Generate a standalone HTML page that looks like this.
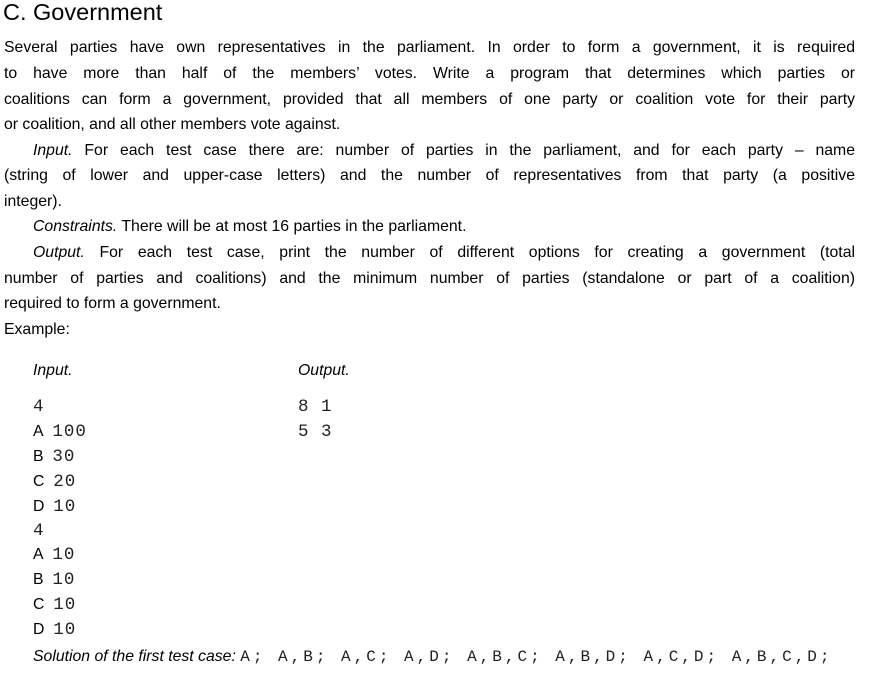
<!DOCTYPE html>
<html><head><meta charset="utf-8"><style>
body{margin:0;width:878px;height:696px;background:#fff;color:#000;position:relative;overflow:hidden;font-family:"Liberation Sans",sans-serif}
.l{position:absolute;left:4px;width:851px;font-size:15.8px;line-height:20px;white-space:nowrap}
.j{text-align:justify;text-align-last:justify;white-space:normal}
.i{font-style:italic}
.c{position:absolute;font-size:15.8px;line-height:20px;white-space:nowrap}
.m{font-family:"Liberation Mono",monospace;font-size:17.5px;letter-spacing:1px;color:#222}
</style></head><body>
<div style="position:absolute;left:3px;top:-3px;font-size:23.5px;line-height:30px">C. Government</div>
<div class="l j" style="top:38px">Several parties have own representatives in the parliament. In order to form a government, it is required</div>
<div class="l j" style="top:64px">to have more than half of the members’ votes. Write a program that determines which parties or</div>
<div class="l j" style="top:90px">coalitions can form a government, provided that all members of one party or coalition vote for their party</div>
<div class="l" style="top:115px">or coalition, and all other members vote against.</div>
<div class="l j" style="top:141px;left:33px;width:822px"><span class="i">Input.</span> For each test case there are: number of parties in the parliament, and for each party – name</div>
<div class="l j" style="top:166px">(string of lower and upper-case letters) and the number of representatives from that party (a positive</div>
<div class="l" style="top:192px">integer).</div>
<div class="l" style="top:217px;left:33px"><span class="i">Constraints.</span> There will be at most 16 parties in the parliament.</div>
<div class="l j" style="top:243px;left:33px;width:822px"><span class="i">Output.</span> For each test case, print the number of different options for creating a government (total</div>
<div class="l j" style="top:269px">number of parties and coalitions) and the minimum number of parties (standalone or part of a coalition)</div>
<div class="l" style="top:294px">required to form a government.</div>
<div class="l" style="top:320px">Example:</div>
<div class="c i" style="left:33px;top:361px">Input.</div>
<div class="c i" style="left:298px;top:361px">Output.</div>
<div class="c m" style="left:33px;top:397px">4</div>
<div class="c" style="left:33px;top:422px">A&nbsp;&nbsp;<span class="m">100</span></div>
<div class="c" style="left:33px;top:447px">B&nbsp;&nbsp;<span class="m">30</span></div>
<div class="c" style="left:33px;top:472px">C&nbsp;&nbsp;<span class="m">20</span></div>
<div class="c" style="left:33px;top:497px">D&nbsp;&nbsp;<span class="m">10</span></div>
<div class="c m" style="left:33px;top:521px">4</div>
<div class="c" style="left:33px;top:545px">A&nbsp;&nbsp;<span class="m">10</span></div>
<div class="c" style="left:33px;top:570px">B&nbsp;&nbsp;<span class="m">10</span></div>
<div class="c" style="left:33px;top:595px">C&nbsp;&nbsp;<span class="m">10</span></div>
<div class="c" style="left:33px;top:620px">D&nbsp;&nbsp;<span class="m">10</span></div>
<div class="c m" style="left:298px;top:397px">8 1</div>
<div class="c m" style="left:298px;top:422px">5 3</div>
<div class="c" style="left:33px;top:647px"><span class="i">Solution of the first test case:</span> <span class="m" style="font-size:16px;letter-spacing:3px">A; A,B; A,C; A,D; A,B,C; A,B,D; A,C,D; A,B,C,D;</span></div>
</body></html>
